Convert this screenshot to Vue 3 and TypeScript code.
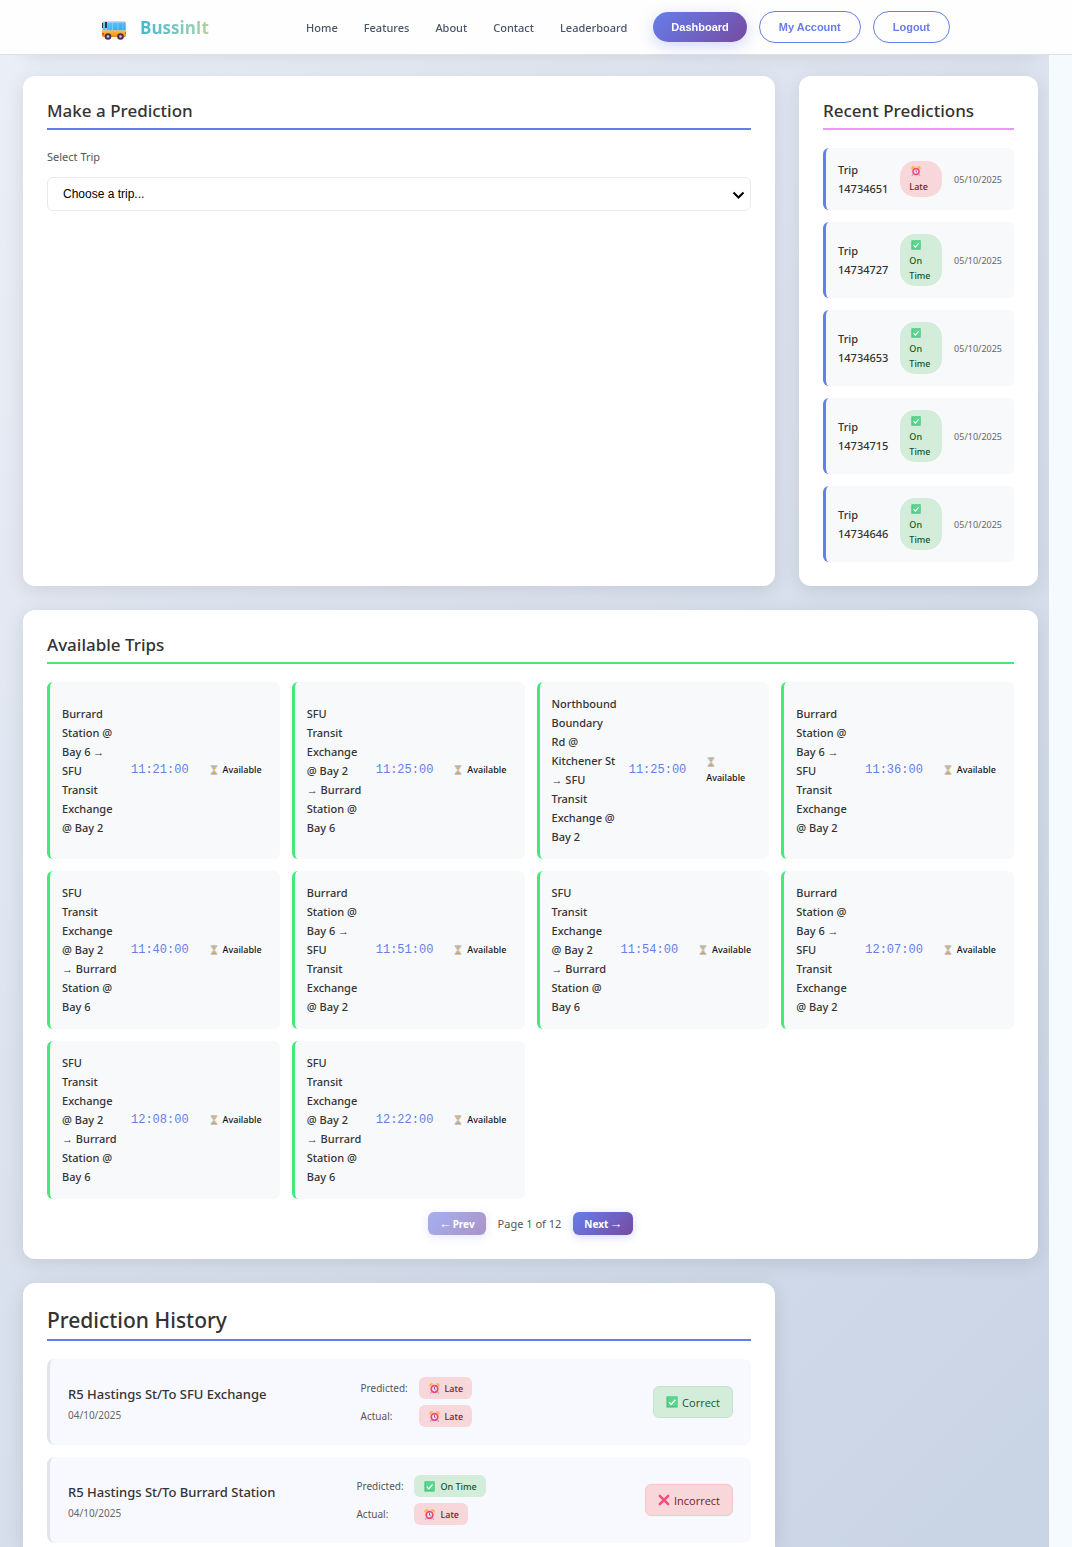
<script setup lang="ts">
import { ref } from 'vue'

interface Prediction {
  id: string
  late: boolean
  date: string
}

interface Trip {
  route: string
  time: string
}

interface HistoryEntry {
  route: string
  date: string
  predictedLate: boolean
  actualLate: boolean
}

const links = ['Home', 'Features', 'About', 'Contact', 'Leaderboard']

const selectedTrip = ref('')

const recent: Prediction[] = [
  { id: '14734651', late: true, date: '05/10/2025' },
  { id: '14734727', late: false, date: '05/10/2025' },
  { id: '14734653', late: false, date: '05/10/2025' },
  { id: '14734715', late: false, date: '05/10/2025' },
  { id: '14734646', late: false, date: '05/10/2025' },
]

const toSfu = 'Burrard\nStation @\nBay 6 →\nSFU\nTransit\nExchange\n@ Bay 2'
const toBurrard = 'SFU\nTransit\nExchange\n@ Bay 2\n→ Burrard\nStation @\nBay 6'
const northbound = 'Northbound\nBoundary\nRd @\nKitchener St\n→ SFU\nTransit\nExchange @\nBay 2'

const trips: Trip[] = [
  { route: toSfu, time: '11:21:00' },
  { route: toBurrard, time: '11:25:00' },
  { route: northbound, time: '11:25:00' },
  { route: toSfu, time: '11:36:00' },
  { route: toBurrard, time: '11:40:00' },
  { route: toSfu, time: '11:51:00' },
  { route: toBurrard, time: '11:54:00' },
  { route: toSfu, time: '12:07:00' },
  { route: toBurrard, time: '12:08:00' },
  { route: toBurrard, time: '12:22:00' },
]

const history: HistoryEntry[] = [
  { route: 'R5 Hastings St/To SFU Exchange', date: '04/10/2025', predictedLate: true, actualLate: true },
  { route: 'R5 Hastings St/To Burrard Station', date: '04/10/2025', predictedLate: false, actualLate: true },
]

const isCorrect = (h: HistoryEntry): boolean => h.predictedLate === h.actualLate
const statusIcon = (late: boolean): string => (late ? '#icon-alarm' : '#icon-check')
const statusText = (late: boolean): string => (late ? 'Late' : 'On Time')
</script>

<template>
  <div class="page">
    <svg class="sprite" aria-hidden="true">
      <defs>
        <linearGradient id="bus-window" x1="0" y1="0" x2="1" y2="1">
          <stop offset="0" stop-color="#4fd0ff" />
          <stop offset="1" stop-color="#3a9df0" />
        </linearGradient>
        <linearGradient id="bus-body" x1="0" y1="0" x2="0" y2="1">
          <stop offset="0" stop-color="#ffc23a" />
          <stop offset="1" stop-color="#f58220" />
        </linearGradient>
        <symbol id="icon-bus" viewBox="0 0 24 20">
          <path d="M1 1h22l1 1v9H0V2z" fill="#d9d3e6" />
          <path d="M5 2.500h18.500v8H5z" fill="url(#bus-window)" />
          <path d="M1 2.500h3.500v8H1z" fill="#56c8fa" />
          <path d="M3 2h2v6H3zM0 3h1v5H0z" fill="#3b2c4e" />
          <path d="M10.500 2.500v8M16 2.500v8M21 2.500v8" stroke="#8fe0ff" stroke-width=".6" />
          <path d="M0 10.500h24V16l-1 1H1l-1-1z" fill="url(#bus-body)" />
          <path d="M0 13h2v2H0zM23 12h1v2h-1z" fill="#f0453a" />
          <circle cx="6" cy="16.500" r="3.300" fill="#45314f" />
          <circle cx="18.500" cy="16.500" r="3.300" fill="#45314f" />
          <circle cx="6" cy="16.500" r="1.300" fill="#cfc4dc" />
          <circle cx="18.500" cy="16.500" r="1.300" fill="#cfc4dc" />
        </symbol>
        <symbol id="icon-alarm" viewBox="0 0 12 12">
          <path d="M2.500 10l-1 1.500M9.500 10l1 1.500" stroke="#b8a6dd" stroke-width="1.300" stroke-linecap="round" />
          <path d="M1 3.500A2 2 0 0 1 4 1zM11 3.500A2 2 0 0 0 8 1z" fill="#fcb43c" stroke="#fcb43c" stroke-linejoin="round" />
          <circle cx="6" cy="6.500" r="4.500" fill="#f4426b" />
          <circle cx="6" cy="6.500" r="2.700" fill="#efe3f7" />
          <path d="M6 4.500v2.200l1.300.8" fill="none" stroke="#5b3e73" stroke-width=".9" />
        </symbol>
        <symbol id="icon-check" viewBox="0 0 12 12">
          <path d="M.5.500h11v11H.5z" fill="#3fb67a" />
          <path d="M1.500.500h10v10h-10z" fill="#57d68d" />
          <path d="M3 6.200l2.200 2.300L9.300 3.800" fill="none" stroke="#fff" stroke-width="1.300" />
        </symbol>
        <symbol id="icon-cross" viewBox="0 0 12 12">
          <path d="M1.800 1.800l8.400 8.400M10.200 1.800l-8.400 8.400" stroke="#fa4b78" stroke-width="2.500" stroke-linecap="round" />
        </symbol>
        <symbol id="icon-hourglass" viewBox="0 0 10 12">
          <path d="M1.800 1.500h6.400V3c0 1.500-2 2.200-2 3s2 1.500 2 3v1.500H1.800V9c0-1.500 2-2.200 2-3s-2-1.500-2-3z" fill="#b9d6f2" />
          <path d="M2.600 2.800h4.800L5 6zM5 6.500l2.700 4H2.300z" fill="#f0a63c" />
          <path d="M1 .5h8v1.400H1zM1 10.100h8v1.400H1z" fill="#a58f80" />
        </symbol>
      </defs>
    </svg>

    <header class="topbar">
      <a class="brand" href="#">
        <svg class="brand-icon" aria-hidden="true"><use href="#icon-bus" /></svg>
        <span class="brand-name">BussinIt</span>
      </a>
      <nav class="nav">
        <a v-for="l in links" :key="l" href="#">{{ l }}</a>
        <div class="actions">
          <button type="button" class="btn solid">Dashboard</button>
          <button type="button" class="btn outline">My Account</button>
          <button type="button" class="btn outline">Logout</button>
        </div>
      </nav>
    </header>

    <main class="dashboard">
      <div class="card intro"></div>

      <section class="card predict">
        <h2>Make a Prediction</h2>
        <label for="trip">Select Trip</label>
        <div class="select-wrap">
          <select id="trip" v-model="selectedTrip">
            <option value="">Choose a trip...</option>
          </select>
          <svg class="chevron" viewBox="0 0 12 8" aria-hidden="true">
            <path d="M1 1.500l5 5 5-5" fill="none" stroke="#000" stroke-width="2" />
          </svg>
        </div>
      </section>

      <section class="card recent">
        <h2 class="pink">Recent Predictions</h2>
        <ul class="recent-list">
          <li v-for="p in recent" :key="p.id">
            <span class="recent-name">Trip<br />{{ p.id }}</span>
            <span class="pill" :class="p.late ? 'late' : 'ontime'">
              <svg class="emoji-s" aria-hidden="true"><use :href="statusIcon(p.late)" /></svg>
              <span>{{ statusText(p.late) }}</span>
            </span>
            <span class="recent-date">{{ p.date }}</span>
          </li>
        </ul>
      </section>

      <section class="card trips">
        <h2 class="green">Available Trips</h2>
        <ul class="trip-grid">
          <li v-for="(t, i) in trips" :key="i">
            <span class="trip-route">{{ t.route }}</span>
            <span class="trip-time">{{ t.time }}</span>
            <span class="trip-status">
              <svg class="hourglass" aria-hidden="true"><use href="#icon-hourglass" /></svg>
              <span>Available</span>
            </span>
          </li>
        </ul>
        <div class="pager">
          <button type="button" disabled><span class="arrow">←</span>Prev</button>
          <span>Page 1 of 12</span>
          <button type="button">Next<span class="arrow">→</span></button>
        </div>
      </section>

      <section class="card history">
        <h2 class="large">Prediction History</h2>
        <ul class="history-list">
          <li v-for="(h, i) in history" :key="i">
            <div class="info">
              <span class="info-route">{{ h.route }}</span>
              <span class="info-date">{{ h.date }}</span>
            </div>
            <dl class="outcomes">
              <dt>Predicted:</dt>
              <dd :class="h.predictedLate ? 'late' : 'ontime'">
                <svg class="emoji" aria-hidden="true"><use :href="statusIcon(h.predictedLate)" /></svg>
                {{ statusText(h.predictedLate) }}
              </dd>
              <dt>Actual:</dt>
              <dd :class="h.actualLate ? 'late' : 'ontime'">
                <svg class="emoji" aria-hidden="true"><use :href="statusIcon(h.actualLate)" /></svg>
                {{ statusText(h.actualLate) }}
              </dd>
            </dl>
            <span class="verdict" :class="isCorrect(h) ? 'ontime' : 'late'">
              <svg class="emoji-l" aria-hidden="true"><use :href="isCorrect(h) ? '#icon-check' : '#icon-cross'" /></svg>
              {{ isCorrect(h) ? 'Correct' : 'Incorrect' }}
            </span>
          </li>
        </ul>
      </section>
    </main>
  </div>
</template>

<style>
body {
  margin: 0;
  background: #f5faff;
}
</style>

<style scoped>
* {
  box-sizing: border-box;
}

.page {
  font-family: "Noto Sans", "Open Sans", sans-serif;
  color: #333;
  font-size: 11px;
}

.sprite {
  position: absolute;
  width: 0;
  height: 0;
}

ul {
  list-style: none;
  margin: 0;
  padding: 0;
}

/* Top bar */
.topbar {
  position: fixed;
  top: 0;
  left: 0;
  right: 0;
  z-index: 10;
  height: 55px;
  display: flex;
  align-items: center;
  justify-content: space-between;
  padding: 0 122px 0 102px;
  background: #fefefe;
  border-bottom: 1px solid #e0e1e4;
}

.brand {
  display: flex;
  align-items: center;
  gap: 14px;
  text-decoration: none;
}

.brand-icon {
  width: 24px;
  height: 20px;
  margin-top: 6px;
}

.brand-name {
  font-family: "Open Sans", "Noto Sans", sans-serif;
  font-size: 17px;
  font-weight: 700;
  background: linear-gradient(90deg, #45b7d1, #96ceb4 80%, #b9cf98);
  -webkit-background-clip: text;
  background-clip: text;
  color: transparent;
}

.nav {
  display: flex;
  align-items: center;
  gap: 26px;
}

.nav a {
  color: #4a5568;
  font-size: 11px;
  font-weight: 500;
  text-decoration: none;
}

.actions {
  display: flex;
  align-items: center;
  gap: 12px;
}

.btn {
  font-family: "Liberation Sans", Arial, sans-serif;
  font-size: 11px;
  font-weight: 700;
  border-radius: 20px;
  padding: 0 18px;
}

.solid {
  height: 30px;
  border: 0;
  color: #fff;
  background: linear-gradient(135deg, #667eea, #764ba2);
  box-shadow: 0 4px 15px rgba(102, 126, 234, 0.3);
}

.outline {
  height: 32px;
  padding: 0 19px;
  border: 1px solid #667eea;
  background: transparent;
  color: #667eea;
}

/* Dashboard grid */
.dashboard {
  display: grid;
  grid-template-columns: minmax(0, 1fr) 239px;
  grid-template-rows: auto auto auto 1fr;
  gap: 24px;
  min-height: 100vh;
  margin-right: 23px;
  padding: 0 11px 0 23px;
  overflow: hidden;
  background: linear-gradient(135deg, #ebeff7, #c8d3e4);
}

.card {
  background: #fff;
  border-radius: 12px;
  padding: 24px;
  box-shadow: 0 4px 20px rgba(0, 0, 0, 0.1);
}

.intro,
.trips {
  grid-column: 1 / -1;
}

.intro {
  height: 52px;
}

h2 {
  margin: 0 0 18px;
  height: 30px;
  line-height: 21px;
  font-size: 17px;
  font-weight: 500;
  border-bottom: 2px solid #667eea;
}

h2.pink {
  border-color: #f093fb;
}

h2.green {
  border-color: #43e97b;
}

h2.large {
  height: 34px;
  line-height: 26px;
  font-size: 21px;
}

label {
  display: block;
  margin-bottom: 11px;
  line-height: 18px;
  font-size: 11px;
  color: #555;
}

.select-wrap {
  position: relative;
}

select {
  display: block;
  width: 100%;
  height: 34px;
  padding: 0 15px;
  appearance: none;
  border: 1px solid #e9e9ec;
  border-radius: 6px;
  background: #fff;
  color: #000;
  font-family: "Liberation Sans", Arial, sans-serif;
  font-size: 12px;
}

.chevron {
  position: absolute;
  right: 6px;
  top: 14px;
  width: 13px;
  height: 8px;
  pointer-events: none;
}

.late {
  background: #f8d7da;
  color: #721c24;
}

.ontime {
  background: #d4edda;
  color: #155724;
}

/* Recent predictions */
.recent-list {
  display: flex;
  flex-direction: column;
  gap: 12px;
}

.recent-list li {
  display: flex;
  align-items: center;
  gap: 12px;
  padding: 12px;
  border-left: 3px solid #667eea;
  border-radius: 6px;
  background: #f8f9fb;
}

.recent-name {
  line-height: 19px;
  font-weight: 500;
}

.pill {
  flex: 1;
  display: flex;
  flex-direction: column;
  padding: 4px 0 3px 9px;
  border-radius: 15px;
  font-size: 9px;
  line-height: 15px;
  font-weight: 500;
}

.late.pill {
  padding: 3px 0 3px 9px;
}

.emoji-s {
  width: 10px;
  height: 10px;
  margin: 2px 0 3px 2px;
}

.recent-date {
  font-size: 9px;
  color: #666;
}

/* Trips */
.trip-grid {
  display: grid;
  grid-template-columns: repeat(4, minmax(0, 1fr));
  gap: 12px;
}

.trip-grid li {
  display: flex;
  align-items: center;
  gap: 12px;
  padding: 12px 12px 13px;
  border-left: 3px solid #43e97b;
  border-radius: 6px;
  background: #f8f9fb;
}

.trip-route {
  min-width: 57px;
  white-space: pre;
  line-height: 19px;
  font-weight: 500;
}

.trip-time {
  font-family: "Liberation Mono", "Courier New", monospace;
  font-size: 12px;
  color: #667eea;
}

.trip-status {
  flex: 1;
  display: flex;
  flex-wrap: wrap;
  align-items: center;
  column-gap: 4px;
  padding-left: 8px;
  font-size: 9px;
  line-height: 16px;
  font-weight: 500;
  color: #111;
}

.hourglass {
  width: 10px;
  height: 10px;
  margin: 3px 0;
}

.pager {
  display: flex;
  align-items: center;
  justify-content: center;
  gap: 12px;
  margin-top: 13px;
  color: #555;
}

.pager button {
  display: flex;
  align-items: center;
  gap: 1px;
  height: 23px;
  padding: 0 11px;
  border: 0;
  border-radius: 6px;
  background: linear-gradient(135deg, #667eea, #764ba2);
  box-shadow: 0 2px 8px rgba(102, 126, 234, 0.3);
  color: #fff;
  font-family: "Noto Sans", "Open Sans", sans-serif;
  font-size: 10px;
  font-weight: 700;
}

.pager button:disabled {
  opacity: 0.6;
}

.arrow {
  font-family: "Liberation Sans", Arial, sans-serif;
  font-size: 13px;
  line-height: 16px;
}

/* History */
.history {
  grid-column: 1;
  padding-bottom: 3px;
  border-radius: 12px 12px 0 0;
}

.history-list {
  display: flex;
  flex-direction: column;
  gap: 12px;
}

.history-list li {
  display: flex;
  align-items: center;
  padding: 18px;
  border-left: 3px solid #e1e3ea;
  border-radius: 8px;
  background: #f8f9ff;
}

.info {
  flex: 1;
  display: flex;
  flex-direction: column;
  padding-top: 3px;
}

.info-route {
  font-size: 13px;
  line-height: 22px;
  font-weight: 500;
}

.info-date {
  font-size: 10px;
  line-height: 20px;
  color: #666;
}

.outcomes {
  flex: 1;
  display: grid;
  grid-template-columns: 50px 1fr;
  gap: 6px 8px;
  align-items: center;
  margin: 0;
}

.outcomes dt {
  font-size: 10px;
  color: #555;
}

.outcomes dd {
  justify-self: start;
  display: flex;
  align-items: center;
  gap: 5px;
  height: 22px;
  margin: 0;
  padding: 0 9px 0 10px;
  border-radius: 6px;
  font-size: 9px;
  font-weight: 500;
}

.emoji {
  width: 11px;
  height: 11px;
}

.emoji-l {
  width: 12px;
  height: 12px;
}

.verdict {
  display: flex;
  align-items: center;
  gap: 4px;
  height: 32px;
  padding: 0 12px;
  border: 1px solid #c3e6cb;
  border-radius: 6px;
  font-family: "Open Sans", "Noto Sans", sans-serif;
  font-size: 11px;
}

.verdict.late {
  border-color: #f5c6cb;
}
</style>
